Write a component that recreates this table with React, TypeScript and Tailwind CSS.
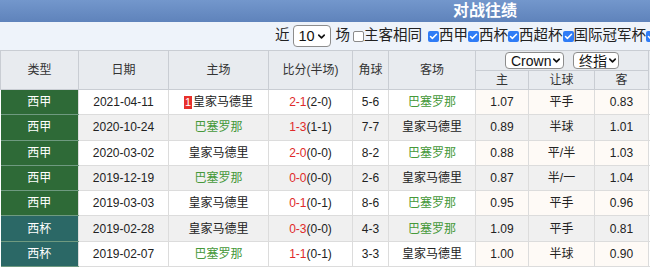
import { Check, ChevronDown } from "lucide-react";
import type { JSX } from "react";

interface Match {
  type: "西甲" | "西杯";
  date: string;
  home: string;
  homeGreen: boolean;
  redCard?: string;
  score: string;
  half: string;
  corner: string;
  away: string;
  h: string;
  line: string;
  a: string;
}

const matches: Match[] = [
  { type: "西甲", date: "2021-04-11", home: "皇家马德里", homeGreen: false, redCard: "1", score: "2-1", half: "(2-0)", corner: "5-6", away: "巴塞罗那", h: "1.07", line: "平手", a: "0.83" },
  { type: "西甲", date: "2020-10-24", home: "巴塞罗那", homeGreen: true, score: "1-3", half: "(1-1)", corner: "7-7", away: "皇家马德里", h: "0.89", line: "半球", a: "1.01" },
  { type: "西甲", date: "2020-03-02", home: "皇家马德里", homeGreen: false, score: "2-0", half: "(0-0)", corner: "8-2", away: "巴塞罗那", h: "0.88", line: "平/半", a: "1.03" },
  { type: "西甲", date: "2019-12-19", home: "巴塞罗那", homeGreen: true, score: "0-0", half: "(0-0)", corner: "2-6", away: "皇家马德里", h: "0.87", line: "半/一", a: "1.04" },
  { type: "西甲", date: "2019-03-03", home: "皇家马德里", homeGreen: false, score: "0-1", half: "(0-1)", corner: "8-6", away: "巴塞罗那", h: "0.95", line: "平手", a: "0.96" },
  { type: "西杯", date: "2019-02-28", home: "皇家马德里", homeGreen: false, score: "0-3", half: "(0-0)", corner: "4-3", away: "巴塞罗那", h: "1.09", line: "平手", a: "0.81" },
  { type: "西杯", date: "2019-02-07", home: "巴塞罗那", homeGreen: true, score: "1-1", half: "(0-1)", corner: "3-3", away: "皇家马德里", h: "1.00", line: "半球", a: "0.90" },
];

function Box({ checked, label }: { checked: boolean; label?: string }): JSX.Element {
  return (
    <span className="flex shrink-0 items-center">
      {checked ? (
        <span className="flex h-[11px] w-[11px] items-center justify-center rounded-[2px] bg-[#2f7cf6]">
          <Check className="h-[9px] w-[9px] text-white" strokeWidth={4} />
        </span>
      ) : (
        <span className="h-[11px] w-[11px] rounded-[2px] border border-[#8a8a8a] bg-white" />
      )}
      {label && <span>{label}</span>}
    </span>
  );
}

function Picker({ text, className }: { text: string; className: string }): JSX.Element {
  return (
    <span
      className={`flex shrink-0 items-center justify-between whitespace-nowrap rounded-[4px] border border-[#8d8d8d] bg-white pl-[5px] pr-[3px] leading-none text-[#111] ${className}`}
    >
      {text}
      <ChevronDown className="h-[11px] w-[11px] shrink-0" strokeWidth={3.5} />
    </span>
  );
}

const th = "border border-[#c9cdd3] bg-[#e8ebef] font-normal text-[#333]";
const td = "border border-[#dcdcdc] text-center";

export default function App(): JSX.Element {
  return (
    <div className="w-[650px] h-[268px] overflow-hidden bg-white font-['Liberation_Sans','Noto_Sans_CJK_SC',sans-serif]">
      <div className="w-[970px]">
        <div className="flex h-[22px] items-center justify-center bg-gradient-to-b from-[#7397cc] to-[#5f83bb] text-[16px] font-bold text-white">
          对战往绩
        </div>
        <div className="flex h-[28px] items-center whitespace-nowrap bg-[#eef3fa] pl-[275px] text-[14.5px] text-[#222]">
          <span>近</span>
          <Picker text="10" className="ml-[3px] mr-[5px] h-[22px] w-[38px]" />
          <span className="mr-[3px]">场</span>
          <Box checked={false} label="主客相同" />
          <span className="w-[6px] shrink-0" />
          <Box checked label="西甲" />
          <Box checked label="西杯" />
          <Box checked label="西超杯" />
          <Box checked label="国际冠军杯" />
          <Box checked />
        </div>
        <table className="w-[760px] table-fixed border-collapse text-[12px] text-[#222]">
          <colgroup>
            <col className="w-[78px]" />
            <col className="w-[90px]" />
            <col className="w-[100px]" />
            <col className="w-[84px]" />
            <col className="w-[36px]" />
            <col className="w-[87px]" />
            <col className="w-[53px]" />
            <col className="w-[66px]" />
            <col className="w-[54px]" />
            <col className="w-[112px]" />
          </colgroup>
          <thead>
            <tr className="h-[19px]">
              <th rowSpan={2} className={th}>类型</th>
              <th rowSpan={2} className={th}>日期</th>
              <th rowSpan={2} className={th}>主场</th>
              <th rowSpan={2} className={th}>比分(半场)</th>
              <th rowSpan={2} className={th}>角球</th>
              <th rowSpan={2} className={th}>客场</th>
              <th colSpan={3} className={`${th} p-0`}>
                <div className="flex h-[19px] items-center justify-center gap-[9px] text-[14px]">
                  <Picker text="Crown" className="h-[17px] w-[59px]" />
                  <Picker text="终指" className="h-[17px] w-[46px]" />
                </div>
              </th>
              <th rowSpan={2} className={th}></th>
            </tr>
            <tr className="h-[19px]">
              <th className={th}>主</th>
              <th className={th}>让球</th>
              <th className={th}>客</th>
            </tr>
          </thead>
          <tbody>
            {matches.map((m, i) => {
              const bg = i % 2 === 0 ? "bg-white" : "bg-[#f0f0f0]";
              const odds = i % 2 === 0 ? "bg-[#fefaf6]" : "bg-[#f0f0f0]";
              return (
                <tr key={m.date} className="h-[25.3px]">
                  <td
                    className={`border-b border-[#6f9a80] text-center text-white ${
                      m.type === "西甲" ? "bg-[#2e6a37]" : "bg-[#2b6866]"
                    }`}
                  >
                    {m.type}
                  </td>
                  <td className={`${td} ${bg}`}>{m.date}</td>
                  <td className={`${td} ${bg} ${m.homeGreen ? "text-[#46993a]" : ""}`}>
                    {m.redCard && (
                      <span className="mr-[1px] inline-block bg-[#e8302b] px-[1px] text-[11px] leading-[13px] text-white">
                        {m.redCard}
                      </span>
                    )}
                    {m.home}
                  </td>
                  <td className={`${td} ${bg}`}>
                    <span className="text-[#e02a2a]">{m.score}</span>
                    {m.half}
                  </td>
                  <td className={`${td} ${bg}`}>{m.corner}</td>
                  <td className={`${td} ${bg} ${m.homeGreen ? "" : "text-[#46993a]"}`}>{m.away}</td>
                  <td className={`${td} ${odds}`}>{m.h}</td>
                  <td className={`${td} ${odds}`}>{m.line}</td>
                  <td className={`${td} ${odds}`}>{m.a}</td>
                  <td className={`${td} bg-white`}></td>
                </tr>
              );
            })}
          </tbody>
        </table>
      </div>
    </div>
  );
}
